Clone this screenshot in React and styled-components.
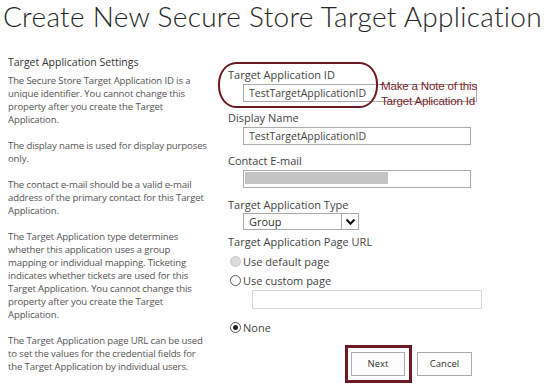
import React from "react";
import styled, {createGlobalStyle} from "styled-components";

const GlobalStyle = createGlobalStyle`
  body {
    margin: 0;
    background: #ffffff;
    font-family: "Open Sans", "Noto Sans", sans-serif;
  }
`;

const Page = styled.div`
  width: 544px;
  height: 387px;
  overflow: hidden;
  background: #ffffff;
`;

const Title = styled.h1`
  margin: 0;
  padding: 0 0 0 3px;
  font-family: Lato, "Open Sans", sans-serif;
  font-size: 28px;
  line-height: 32px;
  font-weight: 300;
  color: #262626;
  letter-spacing: 0.3px;
  white-space: nowrap;
`;

const Columns = styled.div`
  display: flex;
  gap: 8px;
  margin-top: 23px;
  padding-left: 8px;
`;

const Help = styled.div`
  width: 202px;
  flex-shrink: 0;
`;

const HelpHeading = styled.div`
  font-size: 10.5px;
  line-height: 15px;
  color: #333333;
  margin-bottom: 4px;
`;

const HelpText = styled.p`
  margin: 0 0 13px 0;
  font-size: 9.6px;
  line-height: 13px;
  letter-spacing: -0.15px;
  color: #555555;
`;

const Form = styled.div`
  position: relative;
  flex: 1;
  padding: 12px 0 0 10px;
`;

const Label = styled.div`
  font-size: 11px;
  line-height: 15px;
  color: #444444;
  margin-bottom: ${(p) => p.gap || 2}px;
`;

const TextBox = styled.div`
  box-sizing: border-box;
  width: ${(p) => p.width}px;
  height: ${(p) => p.height || 18}px;
  margin: 0 0 ${(p) => p.after}px ${(p) => p.indent || 15}px;
  border: 1px solid ${(p) => (p.light ? "#d6d6d6" : "#ababab")};
  background: #ffffff;
  padding-left: 5px;
  font-size: 10.5px;
  line-height: 16px;
  color: #444444;
  position: relative;
`;

const Redacted = styled.div`
  width: 143px;
  height: 12px;
  margin-top: 1px;
  margin-left: -4px;
  background: #c4c4c4;
`;

const Select = styled.div`
  box-sizing: border-box;
  display: flex;
  align-items: center;
  justify-content: space-between;
  width: 116px;
  height: 17px;
  margin: -1px 0 4px 15px;
  border: 1px solid #ababab;
  font-size: 11px;
  color: #333333;
  padding-left: 5px;
`;

const Arrow = styled.span`
  box-sizing: border-box;
  width: 17px;
  height: 15px;
  border-left: 1px solid #ababab;
  display: flex;
  align-items: center;
  justify-content: center;
`;

const Option = styled.label`
  display: flex;
  align-items: center;
  gap: 2px;
  height: 19px;
  margin-left: 2px;
  font-size: 11px;
  color: #444444;
`;

const Radio = styled.span`
  box-sizing: border-box;
  width: 11px;
  height: 11px;
  border-radius: 50%;
  border: 1px solid ${(p) => (p.disabled ? "#c8c8c8" : "#555555")};
  background: ${(p) => (p.disabled ? "#dcdcdc" : "#ffffff")};
  display: flex;
  align-items: center;
  justify-content: center;

  &::after {
    content: "";
    display: ${(p) => (p.checked ? "block" : "none")};
    width: 5px;
    height: 5px;
    border-radius: 50%;
    background: #222222;
  }
`;

const Buttons = styled.div`
  display: flex;
  align-items: center;
  gap: 5px;
  margin: 8px 0 0 117px;
`;

const Marked = styled.div`
  border: 3px solid #6b1a24;
  padding: 2px 4px 4px 3px;
`;

const Button = styled.button`
  box-sizing: border-box;
  width: ${(p) => p.width}px;
  height: 24px;
  border: 1px solid #ababab;
  background: #fdfdfd;
  font-family: "Open Sans", "Noto Sans", sans-serif;
  font-size: 9.5px;
  color: #333333;
  padding: 0;
`;

const Oval = styled.div`
  position: absolute;
  left: 0;
  top: 7px;
  width: 160px;
  height: 46px;
  box-sizing: border-box;
  border: 2.5px solid #6b1a24;
  border-radius: 18px / 22px;
  pointer-events: none;
`;

const Note = styled.div`
  position: absolute;
  left: 162px;
  top: 23px;
  font-family: "Liberation Sans", Arial, sans-serif;
  font-size: 11.6px;
  line-height: 15px;
  color: #7a1f2d;
  letter-spacing: -0.2px;
  background: linear-gradient(#7a1f2d, #7a1f2d) no-repeat 0 6px / 3px 1px;
  padding-left: 1px;
`;

function Chevron() {
  return (
    <svg width="11" height="8" viewBox="0 0 11 8">
      <path d="M1.5 1.5 L5.5 5.8 L9.5 1.5" fill="none" stroke="#111" strokeWidth="2"/>
    </svg>
  );
}

const help = [
  "The Secure Store Target Application ID is a unique identifier. You cannot change this property after you create the Target Application.",
  "The display name is used for display purposes only.",
  "The contact e-mail should be a valid e-mail address of the primary contact for this Target Application.",
  "The Target Application type determines whether this application uses a group mapping or individual mapping. Ticketing indicates whether tickets are used for this Target Application. You cannot change this property after you create the Target Application.",
  "The Target Application page URL can be used to set the values for the credential fields for the Target Application by individual users.",
];

export default function App() {
  return (
    <Page>
      <GlobalStyle/>
      <Title>Create New Secure Store Target Application</Title>
      <Columns>
        <Help>
          <HelpHeading>Target Application Settings</HelpHeading>
          {help.map((t, i) => (
            <HelpText key={i}>{t}</HelpText>
          ))}
        </Help>
        <Form>
          <Label>Target Application ID</Label>
          <TextBox width={234} after={8}>TestTargetApplicationID</TextBox>
          <Label>Display Name</Label>
          <TextBox width={228} after={8}>TestTargetApplicationID</TextBox>
          <Label>Contact E-mail</Label>
          <TextBox width={228} after={9}>
            <Redacted/>
          </TextBox>
          <Label>Target Application Type</Label>
          <Select>
            Group
            <Arrow><Chevron/></Arrow>
          </Select>
          <Label gap={3}>Target Application Page URL</Label>
          <Option><Radio disabled/>Use default page</Option>
          <Option><Radio/>Use custom page</Option>
          <TextBox width={230} height={19} indent={24} after={9} light/>
          <Option><Radio checked/>None</Option>
          <Buttons>
            <Marked><Button width={54}>Next</Button></Marked>
            <Button width={55}>Cancel</Button>
          </Buttons>
          <Oval/>
          <Note>
            Make a Note of this<br/>Target Aplication Id
          </Note>
        </Form>
      </Columns>
    </Page>
  );
}
